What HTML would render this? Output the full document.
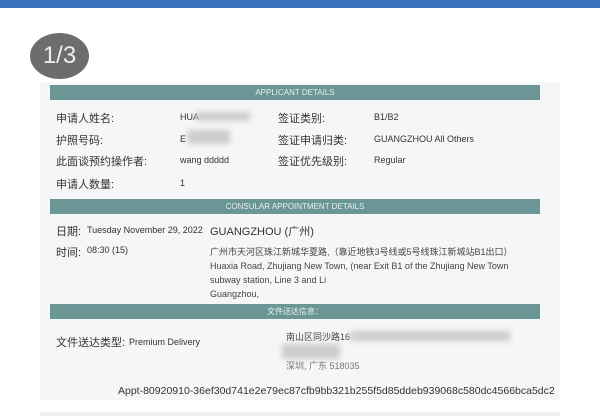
<!DOCTYPE html>
<html><head><meta charset="utf-8"><style>
*{margin:0;padding:0;box-sizing:border-box}
body{width:600px;height:416px;background:#fff;position:relative;overflow:hidden;font-family:"Liberation Sans","Noto Sans CJK SC",sans-serif;color:#333}
.a{position:absolute;white-space:nowrap}
.top{left:0;top:0;width:600px;height:8px;background:#3b72bf}
.circ{left:30px;top:33px;width:59px;height:46px;border-radius:50%;background:#6d6d6d;color:#eee;font-size:24px;line-height:46px;text-align:center}
.panel{left:40px;top:82px;width:520px;height:318px;background:#f4f6f8}
.hd{left:50px;width:490px;height:15px;background:#6b9696;color:#e8f0f0;font-size:8px;line-height:15px;text-align:center}
.l{font-size:11px;color:#333}
.v{font-size:9px;color:#333}
.s{font-size:9px;color:#444}
.blur{background:#ccc;filter:blur(3px)}
</style></head><body>
<div class="a top"></div>
<div class="a circ">1/3</div>
<div class="a panel"></div>
<div class="a hd" style="top:85px">APPLICANT DETAILS</div>
<div class="a l" style="left:56px;top:110px">申请人姓名:</div>
<div class="a v" style="left:180px;top:112px">HUA</div>
<div class="a blur" style="left:196px;top:112px;width:54px;height:9px"></div>
<div class="a l" style="left:278px;top:110px">签证类别:</div>
<div class="a v" style="left:374px;top:112px">B1/B2</div>
<div class="a l" style="left:56px;top:132px">护照号码:</div>
<div class="a v" style="left:180px;top:134px">E</div>
<div class="a blur" style="left:188px;top:130px;width:42px;height:14px"></div>
<div class="a l" style="left:278px;top:132px">签证申请归类:</div>
<div class="a v" style="left:374px;top:134px">GUANGZHOU All Others</div>
<div class="a l" style="left:56px;top:153px">此面谈预约操作者:</div>
<div class="a v" style="left:180px;top:155px">wang ddddd</div>
<div class="a l" style="left:278px;top:153px">签证优先级别:</div>
<div class="a v" style="left:374px;top:155px">Regular</div>
<div class="a l" style="left:56px;top:176px">申请人数量:</div>
<div class="a v" style="left:180px;top:178px">1</div>
<div class="a hd" style="top:199px">CONSULAR APPOINTMENT DETAILS</div>
<div class="a l" style="left:56px;top:223px">日期:</div>
<div class="a v" style="left:87px;top:225px">Tuesday November 29, 2022</div>
<div class="a" style="left:210px;top:223px;font-size:11px">GUANGZHOU (广州)</div>
<div class="a l" style="left:56px;top:244px">时间:</div>
<div class="a v" style="left:87px;top:245px">08:30 (15)</div>
<div class="a s" style="left:210px;top:245px;line-height:14px">广州市天河区珠江新城华夏路,（靠近地铁3号线或5号线珠江新城站B1出口）<br>Huaxia Road, Zhujiang New Town, (near Exit B1 of the Zhujiang New Town<br>subway station, Line 3 and Li<br>Guangzhou,</div>
<div class="a hd" style="top:304px">文件送达信息：</div>
<div class="a l" style="left:56px;top:334px">文件送达类型:</div>
<div class="a v" style="left:129px;top:337px">Premium Delivery</div>
<div class="a s" style="left:286px;top:330px">南山区同沙路16</div>
<div class="a blur" style="left:350px;top:331px;width:160px;height:10px"></div>
<div class="a blur" style="left:282px;top:344px;width:58px;height:15px"></div>
<div class="a s" style="left:286px;top:359px;color:#777">深圳, 广东 518035</div>
<div class="a" style="left:118px;top:385px;font-size:10.5px;color:#333">Appt-80920910-36ef30d741e2e79ec87cfb9bb321b255f5d85ddeb939068c580dc4566bca5dc2</div>
<div class="a" style="left:40px;top:412px;width:520px;height:4px;background:#eef1f4"></div>
</body></html>
